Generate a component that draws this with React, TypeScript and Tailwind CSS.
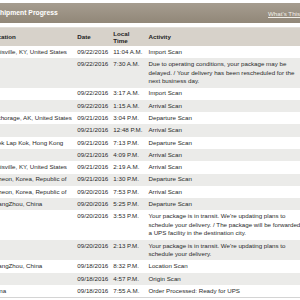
type Row = {
  location: string;
  date: string;
  time: string;
  activity: string[];
};

const rows: Row[] = [
  { location: 'Louisville, KY, United States', date: '09/22/2016', time: '11:04 A.M.', activity: ['Import Scan'] },
  {
    location: '',
    date: '09/22/2016',
    time: '7:30 A.M.',
    activity: [
      'Due to operating conditions, your package may be',
      'delayed. / Your delivery has been rescheduled for the',
      'next business day.',
    ],
  },
  { location: '', date: '09/22/2016', time: '3:17 A.M.', activity: ['Import Scan'] },
  { location: '', date: '09/22/2016', time: '1:15 A.M.', activity: ['Arrival Scan'] },
  { location: 'Anchorage, AK, United States', date: '09/21/2016', time: '3:04 P.M.', activity: ['Departure Scan'] },
  { location: '', date: '09/21/2016', time: '12:48 P.M.', activity: ['Arrival Scan'] },
  { location: 'Chek Lap Kok, Hong Kong', date: '09/21/2016', time: '7:13 P.M.', activity: ['Departure Scan'] },
  { location: '', date: '09/21/2016', time: '4:09 P.M.', activity: ['Arrival Scan'] },
  { location: 'Louisville, KY, United States', date: '09/21/2016', time: '2:19 A.M.', activity: ['Arrival Scan'] },
  { location: 'Incheon, Korea, Republic of', date: '09/21/2016', time: '1:30 P.M.', activity: ['Departure Scan'] },
  { location: 'Incheon, Korea, Republic of', date: '09/20/2016', time: '7:53 P.M.', activity: ['Arrival Scan'] },
  { location: 'GuangZhou, China', date: '09/20/2016', time: '5:25 P.M.', activity: ['Departure Scan'] },
  {
    location: '',
    date: '09/20/2016',
    time: '3:53 P.M.',
    activity: [
      "Your package is in transit. We're updating plans to",
      'schedule your delivery. / The package will be forwarded to',
      'a UPS facility in the destination city.',
    ],
  },
  {
    location: '',
    date: '09/20/2016',
    time: '2:13 P.M.',
    activity: ["Your package is in transit. We're updating plans to", 'schedule your delivery.'],
  },
  { location: 'GuangZhou, China', date: '09/18/2016', time: '8:32 P.M.', activity: ['Location Scan'] },
  { location: '', date: '09/18/2016', time: '4:57 P.M.', activity: ['Origin Scan'] },
  { location: 'China', date: '09/18/2016', time: '7:55 A.M.', activity: ['Order Processed: Ready for UPS'] },
];

export default function App() {
  return (
    <div className="w-[300px] h-[300px] overflow-hidden bg-white font-['Liberation_Sans',Arial,sans-serif] text-[#2a2a2a]">
      <div className="-ml-[12px] w-[318.5px] pt-[3.3px]">
        {/* Title bar */}
        <div className="flex items-center justify-between h-[20px] pl-[7.5px] pr-[3px] mb-[3.7px] bg-gradient-to-b from-[#a69d90] to-[#918778]">
          <span className="text-[6.8px] font-bold text-white">Shipment Progress</span>
          <a className="text-[6.2px] text-[#f2efe9] underline">What's This?</a>
        </div>

        {/* Progress table */}
        <table className="table-fixed border-collapse w-[318.5px] border-b border-[#d4d4d4]">
          <colgroup>
            <col className="w-[87.3px]" />
            <col className="w-[36px]" />
            <col className="w-[35.2px]" />
            <col className="w-[160px]" />
          </colgroup>
          <thead>
            <tr className="h-[18.5px] bg-[#d7d2ca] border-t border-[#e2ded8] text-[6.2px] leading-[7.3px] font-bold text-[#222]">
              <th className="text-left align-middle px-[2px]">Location</th>
              <th className="text-left align-middle px-[2px]">Date</th>
              <th className="text-left align-middle px-[2px]">
                Local
                <br />
                Time
              </th>
              <th className="text-left align-middle px-[2px]">Activity</th>
            </tr>
          </thead>
          <tbody className="text-[6.2px] leading-[8.5px]">
            {rows.map((r, i) => (
              <tr key={i} className={i % 2 === 0 ? 'bg-white' : 'bg-[#ebebe9]'}>
                <td className="align-top px-[2px] py-[1.9px] whitespace-nowrap overflow-hidden">{r.location}</td>
                <td className="align-top px-[2px] py-[1.9px] whitespace-nowrap">{r.date}</td>
                <td className="align-top px-[2px] py-[1.9px] whitespace-nowrap">{r.time}</td>
                <td className="align-top px-[2px] py-[1.9px] whitespace-nowrap">
                  {r.activity.map((line, j) => (
                    <div key={j}>{line}</div>
                  ))}
                </td>
              </tr>
            ))}
          </tbody>
        </table>
      </div>
    </div>
  );
}
